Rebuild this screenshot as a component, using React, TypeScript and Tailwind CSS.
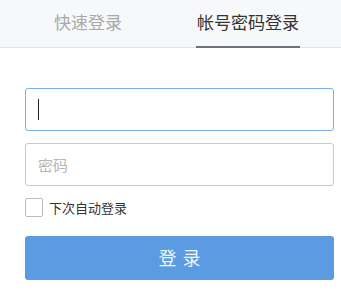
import React from "react";

const FONT = { fontFamily: '"Noto Sans CJK SC", "Liberation Sans", sans-serif' };

export default function App() {
    return (
        <div className="w-[341px] h-[303px] bg-white" style={FONT}>
            {/* Tabs */}
            <div className="h-[48px] bg-[#f7f8fa] border-b border-[#e2e4e8] flex">
                <div className="w-[176px] flex items-center justify-center text-[17px] text-[#a9a9a9] pb-[4px]">
                    快速登录
                </div>
                <div className="relative w-[144px] flex items-center justify-center text-[17px] text-[#333] pb-[4px]">
                    帐号密码登录
                    <span className="absolute left-[20px] right-[20px] -bottom-px h-[2px] bg-[#6c737c]" />
                </div>
            </div>

            <div className="px-[25px] pr-[7px] pt-[40px] flex flex-col">
                {/* Account */}
                <div className="relative h-[43px] rounded-[3px] border border-[#7eaee6]">
                    <input className="w-full h-full outline-none bg-transparent px-[12px] text-[15px]" />
                    <span className="absolute left-[12px] top-[10px] w-px h-[21px] bg-[#222]" />
                </div>

                {/* Password */}
                <input
                    type="password"
                    placeholder="密码"
                    className="mt-[12px] h-[43px] rounded-[3px] border border-[#c9c9c9] px-[12px] text-[15px] outline-none placeholder:text-[#b5b5b5]"
                />

                {/* Remember */}
                <label className="mt-[12px] flex items-center gap-[6px] text-[13px] text-[#333]">
                    <span className="w-[18px] h-[19px] border border-[#bdbdbd] rounded-[2px] bg-white" />
                    下次自动登录
                </label>

                {/* Submit */}
                <button className="mt-[18px] h-[44px] rounded-[3px] bg-[#5b9be1] text-[#eef5fd] text-[18px] tracking-[6px] pl-[6px]">
                    登录
                </button>
            </div>
        </div>
    );
}
